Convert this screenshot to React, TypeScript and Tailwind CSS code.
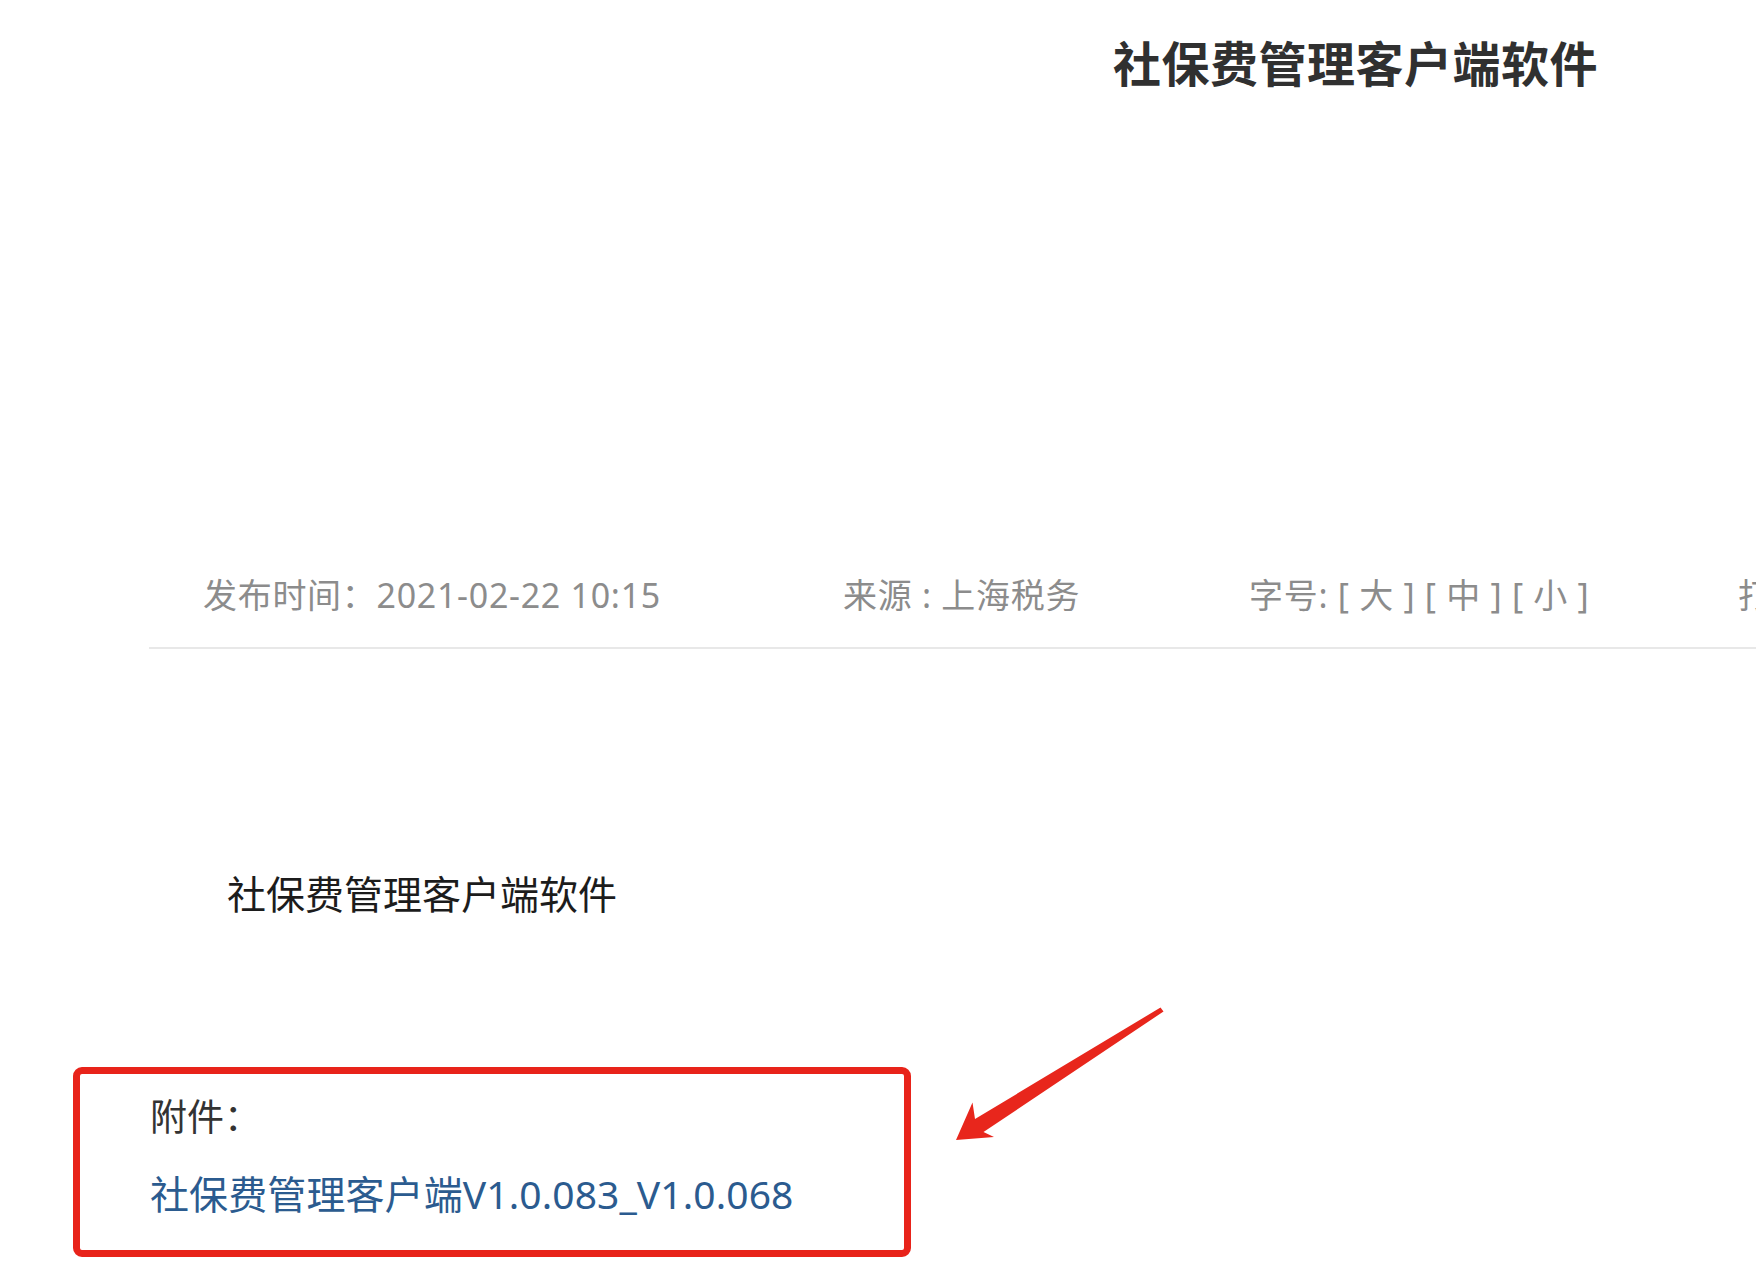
import React from "react";

export default function App() {
  return (
    <div className="relative w-[1756px] h-[1280px] bg-white overflow-hidden font-['Noto_Sans','Noto_Sans_CJK_SC',sans-serif]">
      <div className="pt-[31px] pl-[1113px]">
        <h1 className="text-[48px] leading-[60px] font-bold tracking-[0.5px] text-[#303030] whitespace-nowrap font-['Noto_Sans_CJK_SC',sans-serif]">
          社保费管理客户端软件
        </h1>
      </div>

      <div className="mt-[479px] ml-[149px] pl-[54px] pb-[26px] border-b-2 border-[#e8e8e8] flex text-[34px] leading-[51px] tracking-[0.7px] text-[#8c8c8c] whitespace-nowrap">
        <div className="w-[640px] shrink-0">发布时间：2021-02-22 10:15</div>
        <div className="w-[406px] shrink-0">来源 : 上海税务</div>
        <div className="w-[489px] shrink-0">字号: [ 大 ] [ 中 ] [ 小 ]</div>
        <div className="shrink-0">打印</div>
      </div>

      <p className="mt-[218px] ml-[227px] text-[39px] leading-[53px] text-[#1c1c1c] whitespace-nowrap">
        社保费管理客户端软件
      </p>

      <div className="mt-[147px] ml-[73px] w-[838px] border-[7px] border-[#e8231a] rounded-[9px] pl-[70px] pt-[17px] pb-[30px]">
        <div className="text-[37px] leading-[52px] text-[#333333] whitespace-nowrap">附件：</div>
        <div className="mt-[24px] text-[39px] leading-[53px] tracking-[0.1px] text-[#2b5b8f] whitespace-nowrap">
          社保费管理客户端V1.0.083_V1.0.068
        </div>
      </div>

      <svg
        className="absolute inset-0 pointer-events-none"
        width="1756"
        height="1280"
        viewBox="0 0 1756 1280"
      >
        <polygon
          points="956,1140 972.5,1102.5 975,1119 1160.5,1007.5 1163.5,1011.5 983.5,1132 994,1137"
          fill="#e8261c"
        />
      </svg>
    </div>
  );
}
